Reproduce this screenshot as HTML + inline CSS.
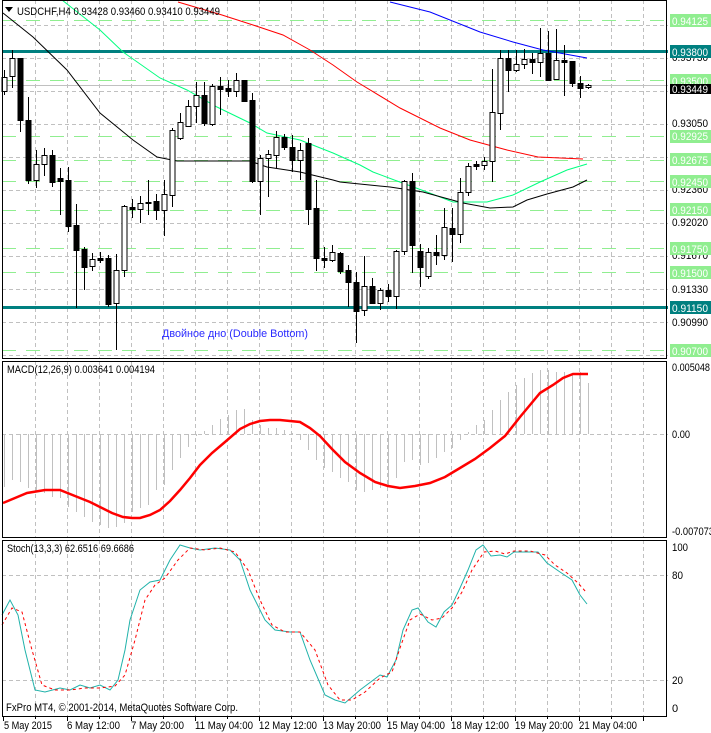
<!DOCTYPE html>
<html><head><meta charset="utf-8"><style>
html,body{margin:0;padding:0;background:#fff;}
body{width:711px;height:733px;overflow:hidden;position:relative;font-family:"Liberation Sans",sans-serif;}
svg{position:absolute;left:0;top:0;}
svg text{font-family:"Liberation Sans",sans-serif;font-size:11px;fill:#000;}
</style></head><body>
<svg id="s" width="711" height="733" viewBox="0 0 711 733" xmlns="http://www.w3.org/2000/svg">
<g id="grid"></g>
<g id="lines"></g>
<g id="candles"></g>
<g id="axis"></g>
<path d="M5 7 L13 7 L9 12 Z" fill="#000"/>
<text x="17" y="15" textLength="203" lengthAdjust="spacingAndGlyphs">USDCHF,H4  0.93428 0.93460 0.93410 0.93449</text>
<text x="162" y="337" textLength="146" lengthAdjust="spacingAndGlyphs" style="fill:#2a2aff">Двойное дно (Double Bottom)</text>
<text x="7" y="373" textLength="148" lengthAdjust="spacingAndGlyphs">MACD(12,26,9) 0.003641 0.004194</text>
<text x="7" y="552" textLength="127" lengthAdjust="spacingAndGlyphs">Stoch(13,3,3) 62.6516 69.6686</text>
<text x="6" y="711" textLength="232" lengthAdjust="spacingAndGlyphs">FxPro MT4, © 2001-2014, MetaQuotes Software Corp.</text>
<g id="rlabels">
<text x="672" y="61" textLength="36" lengthAdjust="spacingAndGlyphs">0.93730</text>
<text x="672" y="127" textLength="36" lengthAdjust="spacingAndGlyphs">0.93050</text>
<text x="672" y="193" textLength="36" lengthAdjust="spacingAndGlyphs">0.92360</text>
<text x="672" y="226" textLength="36" lengthAdjust="spacingAndGlyphs">0.92020</text>
<text x="672" y="259" textLength="36" lengthAdjust="spacingAndGlyphs">0.91670</text>
<text x="672" y="293" textLength="36" lengthAdjust="spacingAndGlyphs">0.91330</text>
<text x="672" y="326" textLength="36" lengthAdjust="spacingAndGlyphs">0.90990</text>
<rect x="670" y="14" width="41" height="13" fill="#90ee90"/><text x="672" y="25" textLength="36" lengthAdjust="spacingAndGlyphs" style="fill:#fff">0.94125</text>
<rect x="670" y="45" width="41" height="13" fill="#008080"/><text x="672" y="56" textLength="36" lengthAdjust="spacingAndGlyphs" style="fill:#fff">0.93800</text>
<rect x="670" y="74" width="41" height="13" fill="#90ee90"/><text x="672" y="85" textLength="36" lengthAdjust="spacingAndGlyphs" style="fill:#fff">0.93500</text>
<rect x="670" y="84" width="41" height="10" fill="#000"/><text x="672" y="93" textLength="36" lengthAdjust="spacingAndGlyphs" style="fill:#fff">0.93449</text>
<rect x="670" y="130" width="41" height="13" fill="#90ee90"/><text x="672" y="140" textLength="36" lengthAdjust="spacingAndGlyphs" style="fill:#fff">0.92925</text>
<rect x="670" y="153" width="41" height="13" fill="#90ee90"/><text x="672" y="164" textLength="36" lengthAdjust="spacingAndGlyphs" style="fill:#fff">0.92675</text>
<rect x="670" y="175" width="41" height="13" fill="#90ee90"/><text x="672" y="186" textLength="36" lengthAdjust="spacingAndGlyphs" style="fill:#fff">0.92450</text>
<rect x="670" y="203" width="41" height="13" fill="#90ee90"/><text x="672" y="214" textLength="36" lengthAdjust="spacingAndGlyphs" style="fill:#fff">0.92150</text>
<rect x="670" y="242" width="41" height="13" fill="#90ee90"/><text x="672" y="253" textLength="36" lengthAdjust="spacingAndGlyphs" style="fill:#fff">0.91750</text>
<rect x="670" y="266" width="41" height="13" fill="#90ee90"/><text x="672" y="277" textLength="36" lengthAdjust="spacingAndGlyphs" style="fill:#fff">0.91500</text>
<rect x="670" y="301" width="41" height="13" fill="#008080"/><text x="672" y="312" textLength="36" lengthAdjust="spacingAndGlyphs" style="fill:#fff">0.91150</text>
<rect x="670" y="344" width="41" height="13" fill="#90ee90"/><text x="672" y="355" textLength="36" lengthAdjust="spacingAndGlyphs" style="fill:#fff">0.90700</text>
<text x="672" y="371" textLength="38" lengthAdjust="spacingAndGlyphs">0.005048</text>
<text x="672" y="438" textLength="18" lengthAdjust="spacingAndGlyphs">0.00</text>
<text x="672" y="535" textLength="42" lengthAdjust="spacingAndGlyphs">-0.007073</text>
<text x="672" y="551" textLength="16" lengthAdjust="spacingAndGlyphs">100</text>
<text x="672" y="579" textLength="11" lengthAdjust="spacingAndGlyphs">80</text>
<text x="672" y="684" textLength="11" lengthAdjust="spacingAndGlyphs">20</text>
<text x="672" y="712">0</text>
</g>
<g id="tlabels">
<text x="4" y="729" textLength="48" lengthAdjust="spacingAndGlyphs">5 May 2015</text>
<text x="67" y="729" textLength="53" lengthAdjust="spacingAndGlyphs">6 May 12:00</text>
<text x="131" y="729" textLength="53" lengthAdjust="spacingAndGlyphs">7 May 20:00</text>
<text x="195" y="729" textLength="58" lengthAdjust="spacingAndGlyphs">11 May 04:00</text>
<text x="259" y="729" textLength="58" lengthAdjust="spacingAndGlyphs">12 May 12:00</text>
<text x="323" y="729" textLength="58" lengthAdjust="spacingAndGlyphs">13 May 20:00</text>
<text x="387" y="729" textLength="58" lengthAdjust="spacingAndGlyphs">15 May 04:00</text>
<text x="451" y="729" textLength="58" lengthAdjust="spacingAndGlyphs">18 May 12:00</text>
<text x="515" y="729" textLength="58" lengthAdjust="spacingAndGlyphs">19 May 20:00</text>
<text x="579" y="729" textLength="58" lengthAdjust="spacingAndGlyphs">21 May 04:00</text>
</g>
</svg>
<script>
var NS="http://www.w3.org/2000/svg";
function el(g,t,a){var e=document.createElementNS(NS,t);for(var k in a)e.setAttribute(k,a[k]);document.getElementById(g).appendChild(e);return e;}
var dash="4,3";
for(var x=35;x<668;x+=32){
 [[0,358],[361,537],[540,716]].forEach(function(r){el("grid","line",{x1:x+.5,y1:r[0],x2:x+.5,y2:r[1],stroke:"#c0c0c0","stroke-dasharray":dash});});
}
[25,58,91,124,157,190,223,256,289,322,355].forEach(function(y){el("grid","line",{x1:2,y1:y+.5,x2:668,y2:y+.5,stroke:"#c0c0c0","stroke-dasharray":dash});});
[20,80,136,160,181,210,248,272,350].forEach(function(y){el("grid","line",{x1:2,y1:y+.5,x2:668,y2:y+.5,stroke:"#90ee90","stroke-dasharray":"14,10"});});
[434,575,680].forEach(function(y){el("grid","line",{x1:2,y1:y+.5,x2:668,y2:y+.5,stroke:"#c0c0c0","stroke-dasharray":dash});});
el("grid","line",{x1:2,y1:85.5,x2:668,y2:85.5,stroke:"#c0c0c0"});
el("grid","line",{x1:2,y1:51.5,x2:668,y2:51.5,stroke:"#008080","stroke-width":3});
el("grid","line",{x1:2,y1:307.5,x2:668,y2:307.5,stroke:"#008080","stroke-width":3});
function poly(pts,c,w,da){var a={points:pts.map(function(p){return p.join(",")}).join(" "),fill:"none",stroke:c,"stroke-width":w||1};if(da)a["stroke-dasharray"]=da;el("lines","polyline",a);}
poly([[390,2],[430,12],[480,32],[513,42],[543,50],[565,54],[587,58]],"#0000ff");
poly([[178,2],[222,15],[253,25],[283,35],[310,50],[333,65],[357,82],[400,108],[440,128],[470,140],[507,150],[538,157],[583,159]],"#ff0000");
poly([[62,0],[100,30],[123,52],[160,78],[187,90],[217,107],[250,123],[267,133],[300,140],[333,153],[360,165],[373,172],[397,181],[427,192],[453,202],[487,202],[513,195],[540,182],[567,170],[587,164]],"#00ff7f");
poly([[3,13],[33,37],[67,70],[100,113],[133,140],[157,157],[177,161],[250,161],[267,167],[300,172],[333,180],[340,182],[390,187],[423,192],[463,203],[490,208],[513,207],[527,200],[547,194],[573,187],[587,180]],"#000");
var C=[[77,91,70,95,0],[58,76,50,88,0],[58,120,58,132,1],[120,180,97,184,1],[164,180,150,188,0],[155,164,148,176,0],[155,182,150,187,1],[178,181,168,215,1],[180,226,167,232,1],[225,250,204,308,1],[249,267,247,290,1],[259,266,253,271,0],[258,260,252,263,1],[258,304,255,307,1],[270,303,254,350,0],[206,270,205,277,0],[207,209,199,218,1],[203,209,196,223,0],[202,203,180,215,1],[201,210,194,220,1],[194,210,180,236,0],[130,195,128,207,0],[122,138,113,140,0],[106,126,100,126,0],[95,106,82,123,0],[95,123,82,126,1],[86,124,84,126,0],[86,89,77,115,1],[88,91,80,97,1],[80,91,73,97,0],[80,101,80,101,1],[100,181,93,183,1],[158,181,155,215,0],[154,158,150,197,0],[137,155,131,168,0],[137,147,134,150,1],[147,160,135,172,1],[150,160,143,180,0],[143,209,138,225,1],[208,258,180,271,1],[258,260,247,268,1],[252,260,245,262,0],[253,271,252,274,1],[270,282,265,307,1],[282,311,272,343,1],[286,310,256,316,0],[286,303,278,304,1],[290,303,288,310,0],[290,296,284,302,1],[251,296,250,309,0],[181,251,180,255,0],[181,245,173,273,1],[251,267,244,287,1],[252,276,248,279,0],[252,255,235,265,1],[227,255,208,260,0],[228,234,208,262,1],[192,234,178,243,0],[166,192,163,196,0],[164,166,161,170,1],[161,165,157,170,0],[112,161,69,182,0],[58,113,50,130,0],[58,70,50,92,1],[64,70,50,72,0],[59,64,49,69,0],[59,62,53,74,1],[53,62,28,77,0],[53,80,31,81,1],[60,79,29,80,0],[60,62,45,96,1],[61,83,61,87,1],[83,88,76,98,1],[85,87,84,89,0]];
C.forEach(function(c,k){var cx=Math.round(3.5+8*k);
 el("candles","line",{x1:cx+.5,y1:c[2],x2:cx+.5,y2:c[3],stroke:"#000"});
 var h=Math.max(c[1]-c[0],1);
 el("candles","rect",{x:cx-2,y:c[0]+.5,width:5,height:h,fill:c[4]?"#000":"#fff",stroke:"#000"});
});
var M=[487,480,482,488,492,493,497,498,507,512,517,522,525,528,527,523,512,508,505,490,485,470,458,447,436,431,425,419,415,410,409,420,425,428,428,430,433,440,450,460,468,472,478,482,490,492,490,488,485,478,462,460,465,463,458,452,448,440,432,425,420,410,400,392,385,378,373,370,370,372,372,373,372,383];
M.forEach(function(v,k){var cx=Math.round(3.5+8*k)+.5;el("lines","line",{x1:cx,y1:434,x2:cx,y2:v,stroke:"#c0c0c0"});});
poly([[3,503],[15,498],[27,493],[45,490],[60,490],[75,496],[90,502],[100,507],[112,513],[123,517],[132,518],[140,518],[150,515],[160,510],[170,501],[180,490],[190,478],[200,465],[212,453],[225,442],[240,429],[250,424],[260,421],[270,420],[280,420],[290,421],[300,422],[310,428],[320,436],[332,449],[345,462],[360,473],[375,482],[388,486],[400,488],[415,486],[430,483],[445,477],[460,468],[475,459],[490,448],[505,436],[520,417],[530,405],[540,393],[553,385],[563,378],[573,374],[588,374]],"#ff0000",2.5);
poly([[2,615],[10,600],[18,615],[25,650],[35,690],[45,692],[60,688],[70,690],[80,685],[90,688],[100,685],[110,690],[118,680],[125,650],[130,620],[140,590],[150,582],[160,580],[170,560],[180,545],[190,548],[200,550],[215,548],[230,550],[240,560],[250,590],[265,620],[275,630],[290,632],[300,632],[310,660],[325,695],[335,700],[345,703],[360,690],[380,675],[387,677],[396,660],[403,630],[412,610],[418,608],[428,622],[436,627],[444,612],[452,605],[460,588],[468,570],[476,550],[483,545],[491,556],[500,555],[507,557],[514,552],[530,552],[538,552],[547,563],[560,572],[572,580],[580,595],[587,604]],"#20b2aa");
poly([[2,625],[12,608],[22,612],[32,650],[42,685],[55,690],[70,690],[85,688],[100,688],[115,686],[125,675],[135,640],[145,600],[155,585],[165,578],[178,560],[190,548],[205,550],[220,548],[235,552],[248,570],[260,600],[272,625],[285,632],[300,632],[315,650],[328,685],[340,700],[352,700],[365,692],[380,678],[392,672],[400,648],[410,620],[420,614],[432,620],[442,618],[452,608],[462,592],[472,570],[484,552],[495,551],[505,554],[514,551],[530,551],[545,555],[555,565],[567,573],[578,583],[586,592]],"#ff0000",1,"3,3");
[[2,0,358],[2,361,537],[2,540,716]].forEach(function(r){el("axis","rect",{x:r[0]+.5,y:r[1]+.5,width:666-r[0],height:r[2]-r[1],fill:"none",stroke:"#000"});});
for(var t=3;t<668;t+=64){el("axis","line",{x1:t+.5,y1:716,x2:t+.5,y2:721,stroke:"#000"});}
for(var t=35;t<668;t+=64){el("axis","line",{x1:t+.5,y1:716,x2:t+.5,y2:719,stroke:"#000"});}
</script>
</body></html>
